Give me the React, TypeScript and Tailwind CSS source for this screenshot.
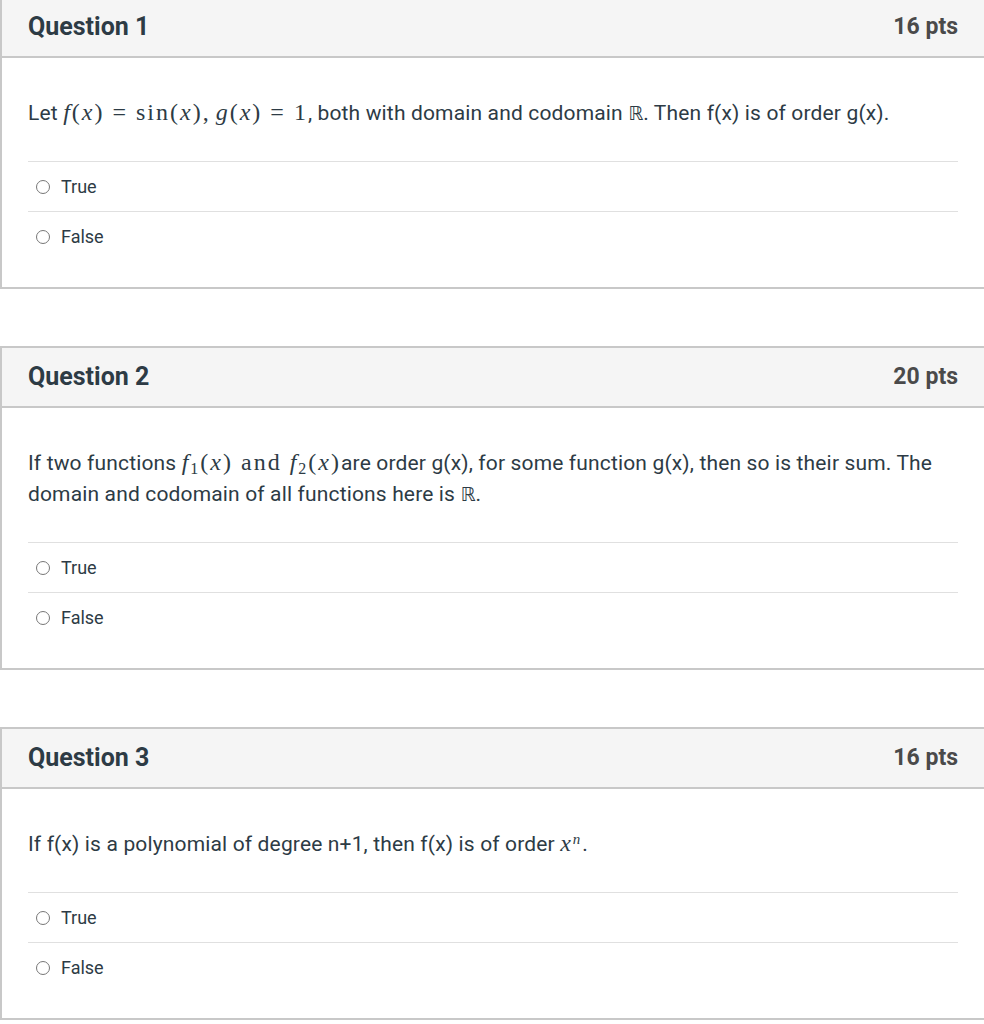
import React from "react";

const serif = "font-['Liberation_Serif','Times_New_Roman',serif]";

function M({ children }: { children: React.ReactNode }) {
  return (
    <span className={`${serif} text-[24px] leading-none tracking-[2px]`}>{children}</span>
  );
}

function I({ children }: { children: React.ReactNode }) {
  return <span className="italic">{children}</span>;
}

// relation sign with MathJax-like thick spacing
function Eq() {
  return <span className="mx-[8px]">=</span>;
}

function Reals() {
  return (
    <span className="font-['DejaVu_Sans',sans-serif] text-[19px] leading-none tracking-normal">ℝ</span>
  );
}

function Answer({ label }: { label: string }) {
  return (
    <div className="flex items-center h-[50px] border-t border-[#e0e0e0] pl-2">
      <span className="w-[14px] h-[14px] rounded-full border border-[#777] bg-white" />
      <span className="ml-[11px] text-[18px] text-[#2d3b45]">{label}</span>
    </div>
  );
}

function Question({
  num,
  pts,
  children,
  first,
}: {
  num: number;
  pts: number;
  children: React.ReactNode;
  first?: boolean;
}) {
  return (
    <section
      className={`w-[986px] border-2 border-[#c8c8c8] bg-white ${first ? "-mt-[4px]" : "mt-[57px]"}`}
    >
      <header className="flex items-center justify-between h-[60px] px-[26px] bg-[#f5f5f5] border-b-2 border-[#c8c8c8]">
        <h2 className="text-[25px] font-bold text-[#2d3b45]">Question {num}</h2>
        <span className="text-[23px] font-bold text-[#4a4a4a]">{pts} pts</span>
      </header>
      <div className="px-[26px] pt-[40px] pb-[26px]">
        <p className="text-[21px] tracking-[0.15px] leading-[31px] text-[#2d3b45] mb-[32px]">
          {children}
        </p>
        <Answer label="True" />
        <Answer label="False" />
      </div>
    </section>
  );
}

export default function App() {
  return (
    <div className="w-[984px] h-[1024px] overflow-hidden bg-white font-['Roboto','Liberation_Sans',sans-serif]">
      <Question num={1} pts={16} first>
        Let{" "}
        <M>
          <I>f</I>(<I>x</I>)<Eq />sin(<I>x</I>),<span className="ml-[5px]" />
          <I>g</I>(<I>x</I>)<Eq />1
        </M>
        , both with domain and codomain <Reals />. Then f(x) is of order g(x).
      </Question>
      <Question num={2} pts={20}>
        If two functions{" "}
        <M>
          <I>f</I>
          <sub className="text-[16px]">1</sub>(<I>x</I>) and <I>f</I>
          <sub className="text-[16px]">2</sub>(<I>x</I>)
        </M>
        are order g(x), for some function g(x), then so is their sum. The domain and codomain of all
        functions here is <Reals />.
      </Question>
      <Question num={3} pts={16}>
        If f(x) is a polynomial of degree n+1, then f(x) is of order{" "}
        <M>
          <I>x</I>
          <sup className="text-[15px]">
            <I>n</I>
          </sup>
        </M>
        .
      </Question>
    </div>
  );
}
